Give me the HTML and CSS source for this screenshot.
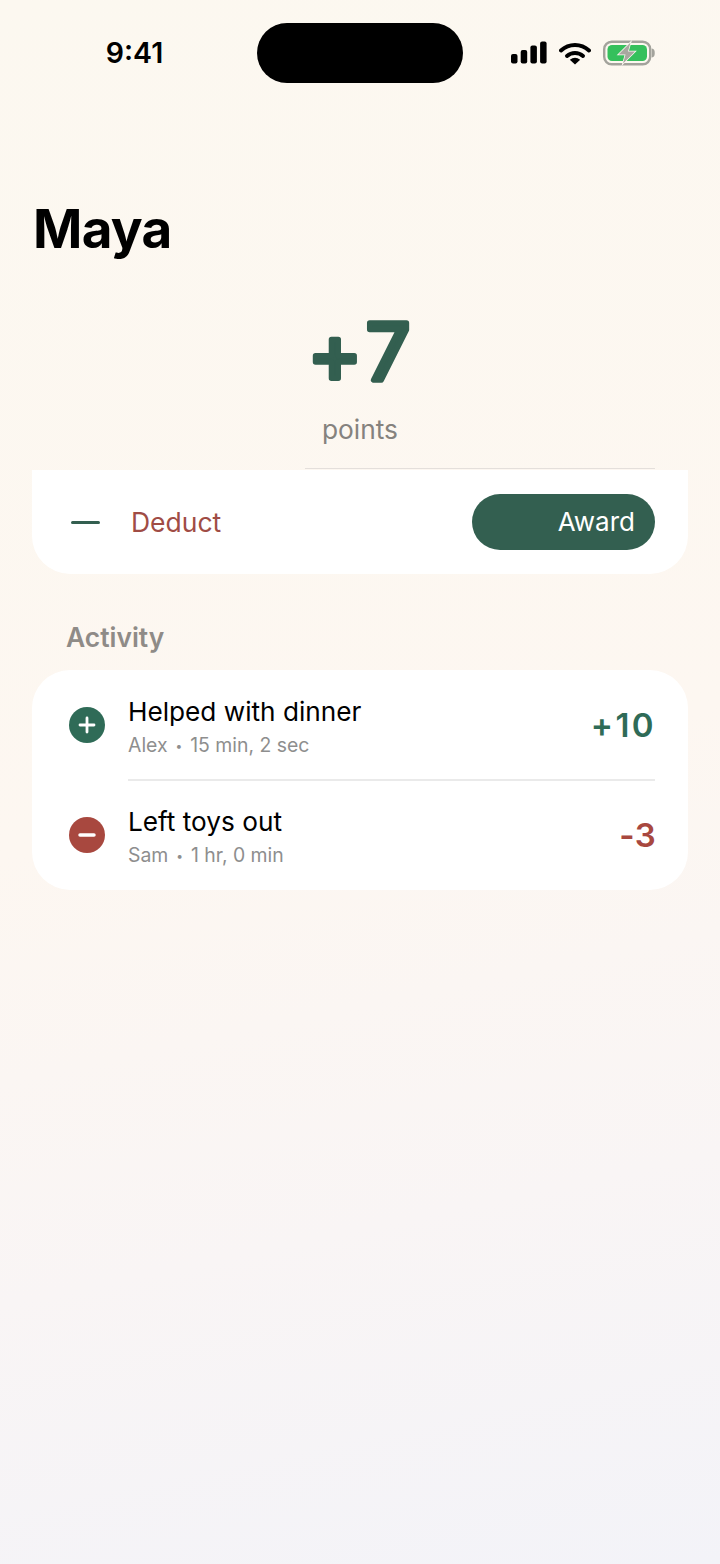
FILE: index.html

```html
<!DOCTYPE html>
<html lang="en">
<head>
  <meta charset="UTF-8">
  <title>Maya</title>
  <link rel="stylesheet" href="styles.css">
</head>
<body>
<div class="screen">
  <div class="status">
    <div class="time">9:41</div>
    <div class="island"></div>
    <div class="status-icons">
      <svg width="36" height="24" viewBox="0 0 36 24">
        <rect x="0" y="13" width="6.5" height="9.5" rx="2" fill="#000"/>
        <rect x="9.7" y="9" width="6.5" height="13.5" rx="2" fill="#000"/>
        <rect x="19.4" y="4.5" width="6.5" height="18" rx="2" fill="#000"/>
        <rect x="29.1" y="0.5" width="6.5" height="22" rx="2" fill="#000"/>
      </svg>
      <svg width="32" height="24" viewBox="0 0 32 24">
        <path d="M2 9.5C10 2 22 2 30 9.5" fill="none" stroke="#000" stroke-width="4" stroke-linecap="round"/>
        <path d="M8 15C12.500 11 19.500 11 24 15" fill="none" stroke="#000" stroke-width="4" stroke-linecap="round"/>
        <path d="M16 23.500L10.800 18.700Q16 15 21.200 18.700Z" fill="#000"/>
      </svg>
      <svg width="52" height="26" viewBox="0 0 52 26">
        <rect x="1.200" y="1.700" width="46" height="22.600" rx="7.500" fill="none" stroke="#a3a39c" stroke-width="2.400"/>
        <rect x="4.500" y="5" width="39.500" height="16" rx="4.500" fill="#35c05c"/>
        <path d="M49.500 9.500C51.500 10 51.500 16 49.500 16.500Z" fill="#a3a39c" stroke="#a3a39c" stroke-width="1.500"/>
        <path class="bolt" d="M27.500 2.500L15.500 14.500H22.500L20 23.500L32 11.500H25Z"/>
      </svg>
    </div>
  </div>

  <h1 class="name">Maya</h1>

  <div class="score">
    <svg class="score-value" width="160" height="120" viewBox="0 0 160 120">
      <text x="79" y="88.500" text-anchor="middle"><tspan class="score-plus" dy="2">+</tspan><tspan dx="4" dy="-2">7</tspan></text>
    </svg>
    <div class="score-label">points</div>
  </div>
  <div class="score-rule"></div>

  <div class="card actions">
    <div class="minus-bar"></div>
    <div class="deduct">Deduct</div>
    <div class="award">Award</div>
  </div>

  <h2 class="section-title">Activity</h2>

  <div class="card list">
    <div class="row">
      <svg class="row-icon" width="36" height="36" viewBox="0 0 36 36">
        <circle cx="18" cy="18" r="18" fill="#2f6b57"/>
        <path d="M18 11V25M11 18H25" stroke="#fff" stroke-width="2.800" stroke-linecap="round"/>
      </svg>
      <div class="row-body">
        <div class="row-title">Helped with dinner</div>
        <div class="row-sub">Alex <span class="dot">•</span> 15 min, 2 sec</div>
      </div>
      <div class="amount plus">+10</div>
    </div>
    <div class="row-rule"></div>
    <div class="row">
      <svg class="row-icon" width="36" height="36" viewBox="0 0 36 36">
        <circle cx="18" cy="18" r="18" fill="#a8483f"/>
        <path d="M11 18H25" stroke="#fff" stroke-width="3.500" stroke-linecap="round"/>
      </svg>
      <div class="row-body">
        <div class="row-title">Left toys out</div>
        <div class="row-sub">Sam <span class="dot">•</span> 1 hr, 0 min</div>
      </div>
      <div class="amount minus">-3</div>
    </div>
  </div>
</div>
</body>
</html>
```

FILE: styles.css

```css
html, body { margin: 0; padding: 0; }
body { font-family: Inter, "Liberation Sans", sans-serif; color: #000; }
.screen { width: 720px; height: 1564px; overflow: hidden; background: linear-gradient(168deg, #fcf8f0 0%, #fdf7f1 50%, #f9f5f5 76%, #f3f3f8 100%); }

.status { display: grid; grid-template-columns: 257px 206px 257px; padding-top: 23px; height: 60px; }
.time { font-size: 28.500px; font-weight: 600; line-height: 60px; text-align: center; padding-left: 12px; box-sizing: border-box; }
.island { background: #000; border-radius: 30px; }
.status-icons { display: flex; align-items: center; gap: 12px; padding-left: 48px; margin-top: -1px; }
.bolt { fill: #a8a8a0; stroke: #fdf8f1; stroke-width: 1.500px; paint-order: stroke; }

.name { margin: 114px 0 0 33px; font-size: 53px; font-weight: 700; line-height: 64px; letter-spacing: -0.7px; }

.score { display: flex; flex-direction: column; align-items: center; margin-top: 30px; }
.score-value { display: block; }
.score-value text { font-family: Inter, sans-serif; font-size: 78px; font-weight: 400; fill: #335f50; stroke: #335f50; stroke-width: 5.500px; stroke-linejoin: round; stroke-linecap: round; }
.score-plus { font-size: 82px; }
.score-label { font-size: 26.300px; line-height: 34px; color: #85827e; margin-top: 2px; }
.score-rule { height: 1px; margin: 21px 65px 0 305px; background: #e4dfdb; }

.card { background: #fff; margin: 0 32px; }
.actions { display: flex; align-items: center; height: 104px; margin-top: 1px; border-radius: 0 0 38px 38px; padding: 0 33px 0 39px; }
.minus-bar { width: 29px; height: 3px; background: #335f50; border-radius: 2px; }
.deduct { font-size: 26.500px; color: #a04c45; margin-left: 31px; flex: 1; }
.award { width: 183px; height: 56px; box-sizing: border-box; border-radius: 28px; background: #335f50; color: #fff; font-size: 26px; line-height: 56px; text-align: right; padding-right: 20px; }

.section-title { margin: 46px 0 0 66px; font-size: 26.400px; font-weight: 600; line-height: 34px; color: #8f8b87; }

.list { margin-top: 16px; border-radius: 38px; padding: 1px 33px 0 37px; height: 220px; box-sizing: border-box; }
.row { display: flex; align-items: center; height: 108px; }
.row-icon { flex: none; }
.row-body { flex: 1; margin-left: 23px; padding-top: 3px; }
.row-title { font-size: 26.200px; line-height: 34px; }
.row-sub { font-size: 19.400px; line-height: 26px; color: #8e8e8e; margin-top: 3px; }
.dot { font-size: 12px; vertical-align: 2px; margin: 0 2.500px; }
.amount { font-size: 33px; font-weight: 600; margin-right: -1px; }
.amount.plus { color: #2f6b57; letter-spacing: 2.400px; }
.amount.minus { color: #a8483f; letter-spacing: 0.300px; }
.row-rule { height: 2px; margin-left: 59px; background: #eaeaea; }
```
